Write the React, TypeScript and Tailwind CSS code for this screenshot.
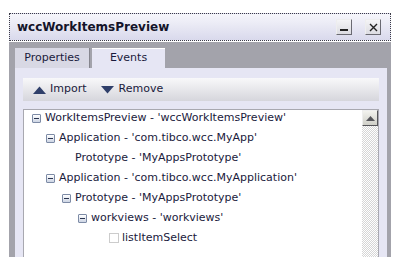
import React from "react";

type Node = {
  label: string;
  level: number;
  kind: "open" | "leaf" | "check";
};

const nodes: Node[] = [
  { label: "WorkItemsPreview - 'wccWorkItemsPreview'", level: 0, kind: "open" },
  { label: "Application - 'com.tibco.wcc.MyApp'", level: 1, kind: "open" },
  { label: "Prototype - 'MyAppsPrototype'", level: 2, kind: "leaf" },
  { label: "Application - 'com.tibco.wcc.MyApplication'", level: 1, kind: "open" },
  { label: "Prototype - 'MyAppsPrototype'", level: 2, kind: "open" },
  { label: "workviews - 'workviews'", level: 3, kind: "open" },
  { label: "listItemSelect", level: 4, kind: "check" },
];

const indent = ["pl-[8px]", "pl-[22px]", "pl-[38px]", "pl-[54px]", "pl-[70px]"];

const MinusBox = () => (
  <span className="w-[9px] h-[9px] border border-[#7d8ba6] bg-gradient-to-b from-white to-[#cdd5e4] flex items-center justify-center mr-[4px] rounded-[1px]">
    <span className="w-[5px] h-[1px] bg-[#2a3550]" />
  </span>
);

const TreeRow = ({ node }: { node: Node }) => {
  let pad = indent[node.level];
  if (node.kind === "leaf") pad = "pl-[51px]";
  return (
    <div className={`h-[20px] flex items-center ${pad}`}>
      {node.kind === "open" && <MinusBox />}
      {node.kind === "check" && (
        <span className="w-[10px] h-[10px] border border-[#cccccc] bg-white mr-[3px] ml-[15px]" />
      )}
      <span className="whitespace-nowrap">{node.label}</span>
    </div>
  );
};

export default function App() {
  return (
    <div className="w-[403px] h-[267px] bg-white pt-[13px] pl-[9px] font-['DejaVu_Sans',Verdana,sans-serif] text-[11px] text-[#1a1a3c]">
      <div className="w-[382px] h-[244px] flex flex-col">
        {/* title bar */}
        <div className="h-[28px] flex items-center justify-between pl-[7px] pr-[9px] border border-dotted border-[#3c3c48] bg-gradient-to-b from-[#f6f6fb] to-[#d9d9ec]">
          <span className="font-bold text-[12px] text-[#14142a]">wccWorkItemsPreview</span>
          <div className="flex gap-[13px]">
            <button className="w-[16px] h-[16px] bg-gradient-to-b from-[#f4f4f6] to-[#dcdce2] border border-[#eeeeee] border-r-[#6a6a72] border-b-[#6a6a72] flex items-end justify-center pb-[3px]">
              <span className="w-[8px] h-[2px] bg-[#222]" />
            </button>
            <button className="w-[16px] h-[16px] bg-gradient-to-b from-[#f4f4f6] to-[#dcdce2] border border-[#eeeeee] border-r-[#6a6a72] border-b-[#6a6a72] flex items-center justify-center">
              <svg width="9" height="9" viewBox="0 0 9 9">
                <path d="M1 1 L8 8 M8 1 L1 8" stroke="#222" strokeWidth="1.4" />
              </svg>
            </button>
          </div>
        </div>

        {/* body */}
        <div className="flex-1 flex flex-col bg-[#a3a3ab] pl-[6px] pr-[4px] pt-[6px] mt-[1px]">
          <div className="h-[20px] flex gap-[2px]">
            <div className="w-[75px] bg-[#d8d8e4] border-r border-[#86868e] flex items-center justify-center">
              Properties
            </div>
            <div className="w-[73px] bg-[#e6e6f4] border-t border-white flex items-center justify-center">
              Events
            </div>
          </div>
          <div className="flex-1 bg-[#e6e6f4] px-[8px] pt-[10px] flex flex-col">
            <div className="h-[23px] flex items-center bg-gradient-to-b from-[#f8f8fa] to-[#d6d6dc] pl-[10px]">
              <span className="flex items-center">
                <svg width="13" height="8" viewBox="0 0 13 8" className="mr-[4px]">
                  <path d="M0 8 L6.5 0.5 L13 8 Z" fill="#2f3f6a" />
                </svg>
                Import
              </span>
              <span className="flex items-center ml-[14px]">
                <svg width="13" height="8" viewBox="0 0 13 8" className="mr-[5px]">
                  <path d="M0 0 L13 0 L6.5 7.5 Z" fill="#2f3f6a" />
                </svg>
                Remove
              </span>
            </div>
            <div className="mt-[8px] flex-1 flex bg-white border border-[#a8a8b0] border-b-0 min-h-0">
              <div className="flex-1 -mt-[2px]">
                {nodes.map((n, i) => (
                  <TreeRow key={i} node={n} />
                ))}
              </div>
              <div className="w-[16px] flex flex-col bg-[repeating-conic-gradient(#d6d6d6_0_25%,#ffffff_0_50%)] bg-[length:2px_2px]">
                <div className="h-[16px] bg-gradient-to-b from-[#f2f2ee] to-[#cfcfc8] border border-[#eeeeee] border-r-[#55555a] border-b-[#55555a] flex items-center justify-center">
                  <svg width="9" height="5" viewBox="0 0 9 5">
                    <path d="M0 5 L4.5 0 L9 5 Z" fill="#55555a" />
                  </svg>
                </div>
              </div>
            </div>
          </div>
        </div>
      </div>
    </div>
  );
}
